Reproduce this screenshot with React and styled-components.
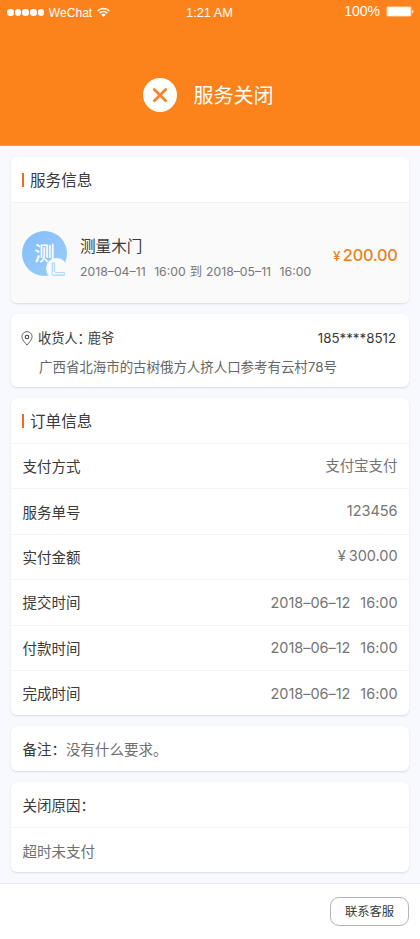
import React from 'react';
import styled, { createGlobalStyle } from 'styled-components';

const orderRows = [
    { label: '支付方式', value: '支付宝支付', lift: 4 },
    { label: '服务单号', value: '123456', lift: 2 },
    { label: '实付金额', value: '300.00', money: true, lift: 2 },
    { label: '提交时间', day: '2018–06–12', time: '16:00' },
    { label: '付款时间', day: '2018–06–12', time: '16:00' },
    { label: '完成时间', day: '2018–06–12', time: '16:00' },
];

const WifiIcon = () => (
    <svg width="13" height="11" viewBox="0 0 13 11" fill="none" stroke="#fff" strokeWidth="1.5">
        <path d="M0.6 4.1C3.9 0.6 9.1 0.6 12.4 4.1" />
        <path d="M2.7 6.2C4.8 4 8.2 4 10.3 6.2" />
        <path d="M4.3 7.8C5.6 6.5 7.4 6.5 8.7 7.8L6.5 10.1Z" fill="#fff" stroke="none" />
    </svg>
);

const BatteryIcon = () => (
    <svg width="28" height="11" viewBox="0 0 28 11">
        <rect x="0.5" y="0.5" width="25" height="10" rx="1.4" fill="#ffd3aa" />
        <rect x="1.7" y="1.3" width="22.6" height="8.4" rx="0.8" fill="#fff" />
        <path d="M26.3 3.8C27.8 4.2 27.8 6.8 26.3 7.2Z" fill="#fff" />
    </svg>
);

const CloseIcon = () => (
    <svg width="34" height="34" viewBox="0 0 34 34">
        <circle cx="17" cy="17" r="17" fill="#fff" />
        <path d="M11.3 11.4L22.7 22.8M22.7 11.4L11.3 22.8" stroke="#f5842b" strokeWidth="2.8" strokeLinecap="round" />
    </svg>
);

const PinIcon = () => (
    <svg width="12" height="15" viewBox="0 0 12 15" fill="none" stroke="#444">
        <path d="M6 14.1C3.9 11.6 0.9 8.6 0.9 5.7A5.1 5.1 0 0 1 11.1 5.7C11.1 8.6 8.1 11.6 6 14.1Z" strokeWidth="0.8" />
        <circle cx="6" cy="6" r="1.8" strokeWidth="1.1" />
    </svg>
);

const RulerIcon = () => (
    <svg width="21" height="21" viewBox="0 0 21 21">
        <circle cx="10.5" cy="10.5" r="10.5" fill="#fafafa" />
        <path
            d="M6.2 5H8.6V13.4A1.2 1.2 0 0 0 9.8 14.5H18.4V17.3H6.2Z"
            fill="none"
            stroke="#90c6fb"
            strokeWidth="0.7"
        />
        <path
            d="M6.2 7H7.4M6.2 9H7.4M6.2 11H7.4M6.2 13H7.4M8.8 17.3V16.1M10.8 17.3V16.1M12.8 17.3V16.1M14.8 17.3V16.1M16.8 17.3V16.1"
            stroke="#90c6fb"
            strokeWidth="0.7"
        />
    </svg>
);

export default function App() {
    return (
        <Page>
            <GlobalStyle />
            <Hero>
                <StatusBar>
                    <Carrier>
                        <Dots>
                            <Dot /><Dot /><Dot /><Dot /><Dot />
                        </Dots>
                        <span>WeChat</span>
                        <WifiIcon />
                    </Carrier>
                    <Clock>1:21 AM</Clock>
                    <Power>
                        <span>100%</span>
                        <BatteryIcon />
                    </Power>
                </StatusBar>
                <HeroStatus>
                    <CloseIcon />
                    <HeroTitle>服务关闭</HeroTitle>
                </HeroStatus>
            </Hero>

            <Cards>
                <Card>
                    <SectionTitle>服务信息</SectionTitle>
                    <Service>
                        <Avatar>
                            测
                            <AvatarBadge><RulerIcon /></AvatarBadge>
                        </Avatar>
                        <ServiceText>
                            <ServiceName>测量木门</ServiceName>
                            <ServiceDate>
                                2018–04–11<Gap $w={8.5} />16:00<Gap $w={4} />到<Gap $w={4} />2018–05–11<Gap $w={8.5} />16:00
                            </ServiceDate>
                        </ServiceText>
                        <Price><Yen>¥</Yen>200.00</Price>
                    </Service>
                </Card>

                <AddressCard>
                    <Receiver>
                        <PinIcon />
                        <ReceiverName>收货人<Colon>：</Colon>鹿爷</ReceiverName>
                        <Phone>185****8512</Phone>
                    </Receiver>
                    <Address>广西省北海市的古树俄方人挤人口参考有云村78号</Address>
                </AddressCard>

                <Card>
                    <SectionTitle>订单信息</SectionTitle>
                    {orderRows.map((row) => (
                        <Row key={row.label}>
                            <Label>{row.label}</Label>
                            <Value $lift={row.lift}>
                                {row.money && <>¥<Gap $w={3} /></>}
                                {row.value}
                                {row.day && <>{row.day}<Gap $w={10} />{row.time}</>}
                            </Value>
                        </Row>
                    ))}
                </Card>

                <Card>
                    <NoteRow>
                        <Label>备注：</Label>
                        <Muted>没有什么要求。</Muted>
                    </NoteRow>
                </Card>

                <Card>
                    <NoteRow><Label>关闭原因：</Label></NoteRow>
                    <ReasonRow><Muted>超时未支付</Muted></ReasonRow>
                </Card>
            </Cards>

            <Footer>
                <ContactButton>联系客服</ContactButton>
            </Footer>
        </Page>
    );
}

const GlobalStyle = createGlobalStyle`
    * {
        box-sizing: border-box;
    }

    body {
        margin: 0;
        background: #f8f9fe;
        font-family: Inter, "Noto Sans CJK SC", sans-serif;
        color: #3a3a3a;
    }
`;

const Page = styled.div`
    width: 420px;
    height: 939px;
    display: flex;
    flex-direction: column;
    overflow: hidden;
    background: #f8f9fe;
    white-space: nowrap;
`;

const Hero = styled.header`
    height: 146px;
    flex: none;
    background: #fc831c;
    border-bottom: 1px solid #fb994a;
    color: #fff;
`;

const StatusBar = styled.div`
    height: 24px;
    display: grid;
    grid-template-columns: 1fr auto 1fr;
    padding: 0 6px 0 7px;
    font-family: "Liberation Sans", Arial, sans-serif;
    font-size: 12.1px;
    line-height: 24px;
`;

const Carrier = styled.div`
    display: flex;
    align-items: center;
    gap: 4.5px;
`;

const Dots = styled.div`
    display: flex;
    gap: 1.2px;
`;

const Dot = styled.i`
    width: 6.5px;
    height: 6.5px;
    border-radius: 50%;
    background: #fff;
`;

const Clock = styled.span`
    padding: 1px 2px 0 0;
    font-size: 12.8px;
`;

const Power = styled.div`
    height: 22px;
    display: flex;
    align-items: center;
    justify-content: flex-end;
    gap: 6px;
    font-size: 14px;
`;

const HeroStatus = styled.div`
    display: flex;
    align-items: flex-start;
    gap: 16.5px;
    padding: 54px 0 0 143px;
`;

const HeroTitle = styled.h1`
    margin: 0;
    padding-top: 1px;
    font-size: 20px;
    font-weight: 400;
    line-height: 34px;
`;

const Cards = styled.main`
    display: flex;
    flex-direction: column;
    gap: 11px;
    padding: 11px 11px 0;
    height: 737px;
    flex: none;
`;

const Card = styled.section`
    flex: none;
    background: #fff;
    border-radius: 6px;
    box-shadow: 0 1px 2px rgba(60, 65, 80, 0.16);
    overflow: hidden;
`;

const SectionTitle = styled.h2`
    height: 45px;
    margin: 0;
    padding: 0 0 2px 11px;
    display: flex;
    align-items: center;
    font-size: 15.6px;
    font-weight: 400;

    &::before {
        content: '';
        width: 2px;
        height: 14px;
        margin: 2px 6px 0 0;
        background: #f06a1d;
    }
`;

const Service = styled.div`
    height: 101px;
    display: flex;
    padding: 0 11.5px 0 11px;
    background: #fafafa;
    border-top: 1px solid #f2f2f2;
`;

const Avatar = styled.div`
    position: relative;
    width: 45px;
    height: 45px;
    margin-top: 28px;
    border-radius: 50%;
    background: linear-gradient(135deg, #84bdf9, #9acdfb);
    color: #fff;
    font-size: 20.5px;
    font-weight: 500;
    line-height: 45px;
    text-align: center;
`;

const AvatarBadge = styled.span`
    position: absolute;
    left: 24px;
    top: 27px;
    display: flex;
`;

const ServiceText = styled.div`
    flex: 1;
    margin-left: 13px;
    padding-top: 33px;
`;

const ServiceName = styled.div`
    font-size: 15.6px;
    line-height: 22px;
`;

const ServiceDate = styled.div`
    margin-top: 5px;
    color: #777;
    font-size: 12.25px;
    line-height: 18px;
`;

const Gap = styled.span`
    display: inline-block;
    width: ${({ $w }) => $w}px;
`;

const Price = styled.div`
    padding-top: 41px;
    color: #ea8022;
    font-size: 16.3px;
    font-weight: 500;
    line-height: 22px;
    letter-spacing: -0.25px;
`;

const Yen = styled.span`
    margin-right: 3px;
    font-size: 12.5px;
`;

const AddressCard = styled(Card)`
    height: 73px;
    padding: 12px 13px 0 10px;
`;

const Receiver = styled.div`
    height: 24px;
    display: flex;
    align-items: center;
    font-size: 13.2px;
`;

const ReceiverName = styled.span`
    flex: 1;
    margin-left: 5px;
    padding-bottom: 2px;
`;

const Colon = styled.span`
    letter-spacing: -3px;
`;

const Phone = styled.span`
    font-size: 13.3px;
`;

const Address = styled.div`
    margin-top: 5px;
    padding-left: 18px;
    color: #666;
    font-size: 13.45px;
    line-height: 24px;
`;

const Row = styled.div`
    height: 45.4px;
    display: flex;
    align-items: center;
    justify-content: space-between;
    padding: 0 11.5px 0 11.5px;
    border-top: 1px solid #f3f3f3;
    font-size: 14.5px;
`;

const Label = styled.span`
    padding-bottom: 1px;
`;

const Value = styled.span`
    padding-bottom: ${({ $lift = 0 }) => $lift}px;
    color: #757575;
    letter-spacing: -0.04px;
`;

const Muted = styled.span`
    color: #707070;
`;

const NoteRow = styled.div`
    height: 45px;
    display: flex;
    align-items: baseline;
    padding: 12px 0 0 11.5px;
    font-size: 14.5px;
`;

const ReasonRow = styled(NoteRow)`
    border-top: 1px solid #f3f3f3;
`;

const Footer = styled.footer`
    flex: 1;
    display: flex;
    justify-content: flex-end;
    align-items: flex-start;
    padding: 13px 11px 0;
    background: #fff;
    border-top: 1px solid #ececf0;
`;

const ContactButton = styled.button`
    width: 79px;
    height: 29px;
    padding: 0 0 1px;
    border: 1px solid #b5b5b5;
    border-radius: 9px;
    background: #fff;
    color: #3a3a3a;
    font-family: inherit;
    font-size: 12.3px;
`;
